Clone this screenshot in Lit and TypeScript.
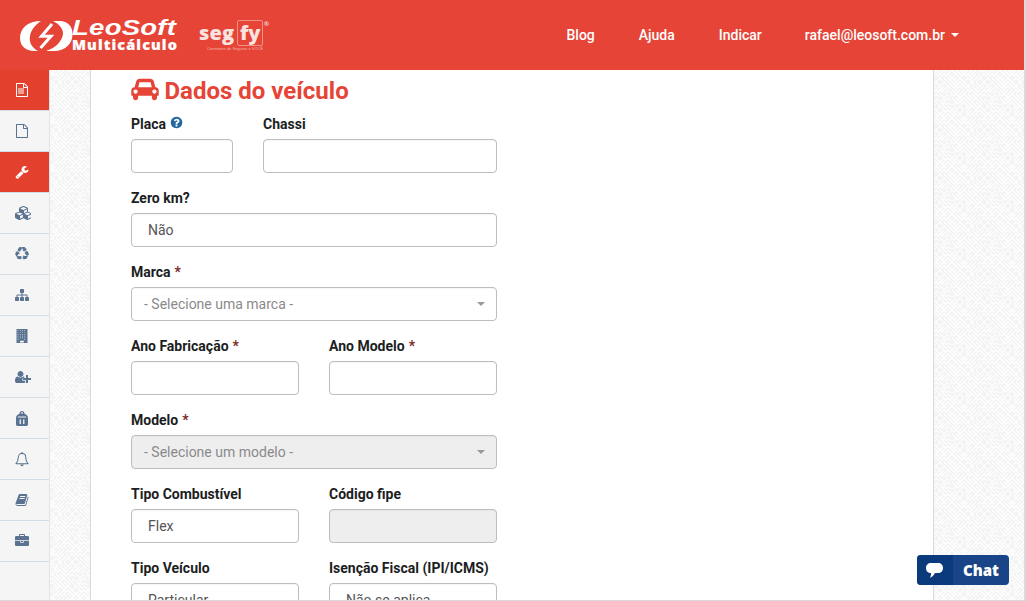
import { LitElement, html, css, svg, unsafeCSS } from "lit";
import { customElement } from "lit/decorators.js";

const FILE_O = "M1596 380q28 28 48 76t20 88v1152q0 40-28 68t-68 28h-1344q-40 0-68-28t-28-68v-1600q0-40 28-68t68-28h896q40 0 88 20t76 48zm-444-244v376h376q-10-29-22-41l-313-313q-12-12-41-22zm384 1528v-1024h-416q-40 0-68-28t-28-68v-416h-768v1536h1280z";
const TEXT_LINES = "M384 736q0-14 9-23t23-9h704q14 0 23 9t9 23v64q0 14-9 23t-23 9h-704q-14 0-23-9t-9-23v-64zm736 224q14 0 23 9t9 23v64q0 14-9 23t-23 9h-704q-14 0-23-9t-9-23v-64q0-14 9-23t23-9h704zm0 256q14 0 23 9t9 23v64q0 14-9 23t-23 9h-704q-14 0-23-9t-9-23v-64q0-14 9-23t23-9h704z";
const WRENCH = "M448 1472q0-26-19-45t-45-19-45 19-19 45 19 45 45 19 45-19 19-45zm644-420l-682 682q-37 37-90 37-52 0-91-37l-106-108q-38-36-38-90 0-53 38-91l681-681q39 98 114.500 173.500t173.500 114.500zm634-435q0 39-23 106-47 134-164.500 217.500t-258.500 83.500q-185 0-316.500-131.500t-131.500-316.500 131.500-316.500 316.500-131.500q58 0 121.500 16.500t107.500 46.500q16 11 16 28t-16 28l-293 169v224l193 107q5-3 79-48.500t135.500-81 70.500-35.500q15 0 23.500 10t8.500 25z";
const CUBES = "M640 1632l384-192v-314l-384 164v342zm-64-454l404-173-404-173-404 173zm1088 454l384-192v-314l-384 164v342zm-64-454l404-173-404-173-404 173zm-448-293l384-165v-266l-384 164v267zm-64-379l441-189-441-189-441 189zm1088 518v416q0 36-19 67t-52 47l-448 224q-25 14-57 14t-57-14l-448-224q-4-2-7-4-2 2-7 4l-448 224q-25 14-57 14t-57-14l-448-224q-33-16-52-47t-19-67v-416q0-38 21.500-70t56.500-48l434-186v-400q0-38 21.500-70t56.500-48l448-192q23-10 50-10t50 10l448 192q35 16 56.500 48t21.500 70v400l434 186q36 16 57 48t21 70z";
const RECYCLE = "M836 1169l-15 368-2 22-420-29q-36-3-67-31.500t-47-65.500q-11-27-14.500-55t4-65 12-55 21.500-64 19-53q78 12 509 28zm-387-586l180 379-147-92q-63 72-111.500 144.500t-72.500 125-39.500 94.500-18.500 63l-4 21-190-357q-17-26-18-56t6-47l8-18q35-63 114-188l-140-86zm1231 517l-188 359q-12 29-36.500 46.500t-43.500 20.500l-18 4q-71 7-219 12l8 164-230-367 211-362 7 173q170 16 283 5t170-33zm-785-924q-47 63-265 435l-317-187-19-12 225-356q20-31 60-45t80-10q24 2 48.500 12t42 21 41.500 33 36 34.500 36 39.500 32 35zm655 307l212 363q18 37 12.500 76t-27.500 74q-13 20-33 37t-38 28-48.500 22-47 16-51.500 14-46 12q-34-72-265-436l313-195zm-143-226l142-83-220 373-419-20 151-86q-34-89-75-166t-75.500-123.500-64.500-80-47-46.500l-17-13 405 1q31-3 58 10.500t39 28.500l11 15q39 61 112 190z";
const SITEMAP = "M1792 1248v320q0 40-28 68t-68 28h-320q-40 0-68-28t-28-68v-320q0-40 28-68t68-28h96v-192h-512v192h96q40 0 68 28t28 68v320q0 40-28 68t-68 28h-320q-40 0-68-28t-28-68v-320q0-40 28-68t68-28h96v-192h-512v192h96q40 0 68 28t28 68v320q0 40-28 68t-68 28h-320q-40 0-68-28t-28-68v-320q0-40 28-68t68-28h96v-192q0-52 38-90t90-38h512v-192h-96q-40 0-68-28t-28-68v-320q0-40 28-68t68-28h320q40 0 68 28t28 68v320q0 40-28 68t-68 28h-96v192h512q52 0 90 38t38 90v192h96q40 0 68 28t28 68z";
const USER_PLUS = "M704 896q-159 0-271.500-112.500t-112.500-271.500 112.500-271.500 271.500-112.500 271.500 112.500 112.500 271.500-112.500 271.500-271.500 112.500zm960 128h352q13 0 22.500 9.500t9.500 22.500v192q0 13-9.500 22.500t-22.500 9.500h-352v352q0 13-9.500 22.500t-22.500 9.500h-192q-13 0-22.500-9.500t-9.500-22.500v-352h-352q-13 0-22.500-9.500t-9.500-22.500v-192q0-13 9.500-22.500t22.500-9.500h352v-352q0-13 9.500-22.500t22.500-9.500h192q13 0 22.500 9.500t9.500 22.500v352zm-736 224q0 52 38 90t90 38h256v238q-68 50-171 50h-874q-121 0-194-69t-73-190q0-53 3.500-103.500t14-109 26.500-108.500 43-97.500 62-81 85.500-53.500 111.500-20q19 0 39 17 79 61 154.500 91.500t164.500 30.500 164.500-30.500 154.500-91.500q20-17 39-17 78 0 133 33v176h-128q-52 0-90 38t-38 90z";
const BOOK = "M1703 478q40 57 18 129l-275 906q-19 64-76.500 107.500t-122.500 43.500h-923q-77 0-148.500-53.500t-99.500-131.500q-24-67-2-127 0-4 3-27t4-37q1-8-3-21.500t-3-19.500q2-11 8-21t16.500-23.500 16.500-23.500q23-38 45-91.500t30-91.500q3-10 .5-30t-.5-28q3-11 17-28t17-23q21-36 42-92t25-90q1-9-2.500-32t.5-28q4-13 22-30.500t22-22.500q19-26 42.500-84.500t27.500-96.500q1-8-3-25.500t-2-26.500q2-8 9-18t18-23 17-21q8-12 16.500-30.500t15-35 16-36 19.500-32 26.500-23.500 36-11.500 47.500 5.500l-1 3q38-9 51-9h761q74 0 114 56t18 130l-274 906q-36 119-71.500 153.500t-128.500 34.500h-869q-27 0-38 15-11 16-1 43 24 70 144 70h923q29 0 56-15.500t35-41.500l300-987q7-22 5-57 38 15 59 43zm-1064 2q-4 13 2 22.500t20 9.500h608q13 0 25.500-9.500t16.500-22.500l21-64q4-13-2-22.500t-20-9.500h-608q-13 0-25.500 9.500t-16.500 22.500zm-83 256q-4 13 2 22.500t20 9.500h608q13 0 25.500-9.500t16.500-22.500l21-64q4-13-2-22.500t-20-9.500h-608q-13 0-25.500 9.500t-16.500 22.500z";
const BRIEFCASE = "M640 256h512v-128h-512v128zm1152 640v480q0 66-47 113t-113 47h-1472q-66 0-113-47t-47-113v-480h672v160q0 26 19 45t45 19h320q26 0 45-19t19-45v-160h672zm-768 0v128h-256v-128h256zm768-480v384h-1792v-384q0-66 47-113t113-47h352v-160q0-40 28-68t68-28h576q40 0 68 28t28 68v160h352q66 0 113 47t47 113z";
const CAR = "M480 1088q0-66-47-113t-113-47-113 47-47 113 47 113 113 47 113-47 47-113zm36-320h1016l-89-357q-2-8-14-17.500t-21-9.500h-768q-9 0-21 9.500t-14 17.500zm1372 320q0-66-47-113t-113-47-113 47-47 113 47 113 113 47 113-47 47-113zm160-96v384q0 14-9 23t-23 9h-96v128q0 80-56 136t-136 56-136-56-56-136v-128h-1024v128q0 80-56 136t-136 56-136-56-56-136v-128h-96q-14 0-23-9t-9-23v-384q0-93 65.500-158.500t158.500-65.500h28l105-419q23-94 104-157.500t179-63.500h768q98 0 179 63.500t104 157.500l105 419h28q93 0 158.500 65.500t65.500 158.500z";
const QUESTION = "M1024 1376v-192q0-14-9-23t-23-9h-192q-14 0-23 9t-9 23v192q0 14 9 23t23 9h192q14 0 23-9t9-23zm256-672q0-88-55.500-163t-138.500-116-170-41q-243 0-371 213-15 24 8 42l132 100q7 6 19 6 16 0 25-12 53-68 86-92 34-24 86-24 48 0 85.500 26t37.500 59q0 38-20 61t-68 45q-63 28-115.500 86.500t-52.500 125.500v36q0 14 9 23t23 9h192q14 0 23-9t9-23q0-19 21.500-49.500t54.500-49.500q32-18 49-28.500t46-35 44.500-48 28-60.500 12.500-81zm384 192q0 209-103 385.500t-279.500 279.500-385.500 103-385.500-103-279.500-279.500-103-385.500 103-385.500 279.500-279.500 385.500-103 385.500 103 279.500 279.500 103 385.500z";

function buildingPath(): string {
  let d = "M192 0h1408v1792h-1408z";
  for (let r = 0; r < 6; r++) {
    for (let c = 0; c < 4; c++) {
      if (r === 5 && (c === 1 || c === 2)) continue;
      const x = 340 + c * 290;
      const y = 170 + r * 230;
      d += `M${x} ${y}h90v90h-90z`;
    }
  }
  d += "M640 1490h500v240h-500z";
  return d;
}

// Woven background tile: short white diagonal dashes laid on a lattice.
function textureTile(): string {
  const size = 48;
  let seed = 7;
  const rnd = () => {
    seed = (seed * 1103515245 + 12345) & 0x7fffffff;
    return seed / 0x7fffffff;
  };
  let d = "";
  for (let y = 0; y < size; y += 4) {
    for (let x = 0; x < size; x += 4) {
      const len = rnd() < 0.5 ? 3 : 6;
      if (rnd() < 0.5) {
        d += `M${x} ${y}l${len} ${len}`;
        d += `M${x - size} ${y}l${len} ${len}M${x} ${y - size}l${len} ${len}`;
      } else {
        d += `M${x + 4} ${y}l-${len} ${len}`;
        d += `M${x + 4 + size} ${y}l-${len} ${len}M${x + 4} ${y - size}l-${len} ${len}`;
      }
    }
  }
  const s = `<svg xmlns='http://www.w3.org/2000/svg' width='${size}' height='${size}'><rect width='${size}' height='${size}' fill='#f3f3f3'/><path d='${d}' stroke='#fff' stroke-width='1.3' stroke-opacity='.95' fill='none'/></svg>`;
  return `url("data:image/svg+xml,${encodeURIComponent(s)}")`;
}

const ic = (d: string, w = 1792, h = 1792) =>
  svg`<svg class="ico" viewBox="0 0 ${w} ${h}" width="${(14 * w) / 1792}" height="14"><path fill-rule="evenodd" d="${d}"/></svg>`;

const BELL = svg`<svg class="ico" viewBox="0 0 15 16" width="14" height="15"><path d="M7.500 1.600c-2.700 0-4 2-4 4.200 0 3.400-1 5.200-2.500 6.700h13c-1.500-1.500-2.500-3.300-2.500-6.700 0-2.200-1.300-4.200-4-4.200z" fill="none" stroke="currentColor" stroke-width="1.100" stroke-linejoin="round"/><path d="M5.700 13.300a1.800 1.800 0 0 0 3.600 0z"/><rect x="6.700" y="0" width="1.600" height="2" rx=".8"/></svg>`;
const BAG = svg`<svg class="ico bag" viewBox="0 0 12 15" width="12" height="15"><path fill-rule="evenodd" d="M3.500 2.700C3.600 1 4.500 0 6 0s2.400 1 2.500 2.700C10.800 3.400 12 5 12 7.500v5.700c0 1-.7 1.800-1.800 1.800H1.800C.7 15 0 14.200 0 13.200V7.500C0 5 1.200 3.400 3.500 2.700zM4.800 2.400h2.400C7.100 1.700 6.700 1.200 6 1.200s-1.100.5-1.200 1.200zM2 5.600v.9h8v-.9zM3.600 8.500V13h1.300V8.500zM7.100 8.500V13h1.300V8.500z"/></svg>`;

const sideItems = [
  { icon: ic(FILE_O + TEXT_LINES), on: true },
  { icon: ic(FILE_O) },
  { icon: ic(WRENCH), on: true },
  { icon: ic(CUBES, 2048) },
  { icon: ic(RECYCLE) },
  { icon: ic(SITEMAP) },
  { icon: ic(buildingPath()) },
  { icon: ic(USER_PLUS, 2048) },
  { icon: BAG },
  { icon: BELL },
  { icon: ic(BOOK) },
  { icon: ic(BRIEFCASE) },
];

@customElement("app-root")
export class AppRoot extends LitElement {
  static styles = css`
    :host {
      display: block;
      width: 1026px;
      height: 601px;
      overflow: hidden;
      font-family: Roboto, "Liberation Sans", sans-serif;
      font-size: 14px;
      color: #1b1e22;
      box-sizing: border-box;
      border-right: 2px solid #d9d9d9;
      border-bottom: 1px solid #d9d9d9;
    }
    * { box-sizing: border-box; }
    .top {
      height: 70px;
      background: #e54436;
      display: flex;
      align-items: center;
      padding-left: 20px;
      color: #fff;
    }
    .logo { display: flex; align-items: center; width: 178px; flex: none; }
    .mark { flex: none; margin-top: 1px; }
    .words { display: flex; flex-direction: column; margin-left: -1px; margin-top: 1px; }
    .leosoft {
      font: italic 700 21.500px/19px "Liberation Sans", sans-serif;
      white-space: nowrap;
      height: 19px;
      transform: scaleX(1.28);
      transform-origin: left center;
      letter-spacing: 0.2px;
    }
    .multi {
      font: 800 14.500px/14px "Open Sans", "Liberation Sans", sans-serif;
      letter-spacing: 1.1px;
      white-space: nowrap;
      height: 14px;
      -webkit-text-stroke: 0.2px #fff;
    }
    .segfy { margin-left: 1px; display: flex; flex-direction: column; position: relative; margin-top: 2px; }
    .segrow { display: flex; align-items: center; height: 26px; }
    .seg { font: 800 20px/24px "Open Sans", sans-serif; color: #f9e3e0; letter-spacing: .1px; }
    .fy {
      font: 800 20px/24px "Open Sans", sans-serif;
      color: #f9e3e0;
      border: 1px solid #f0928a;
      border-radius: 2px;
      width: 26px;
      height: 26px;
      margin-left: 3px;
      text-align: center;
    }
    .reg { position: absolute; left: 65px; top: 0; font: 700 6px/8px "Open Sans", sans-serif; color: #f9e3e0; }
    .tag { font: 4px/6px "Liberation Sans", sans-serif; color: #f5b5ad; text-align: right; white-space: nowrap; height: 6px; }
    .nav {
      margin-left: auto;
      display: flex;
      gap: 44px;
      font-weight: 500;
      font-size: 14px;
      padding-right: 65px;
      align-items: center;
    }
    .nav span { display: inline-flex; align-items: center; white-space: nowrap; }
    .nav .user { margin-left: -1px; }
    .caret {
      display: inline-block;
      margin-left: 6px;
      border-left: 4px solid transparent;
      border-right: 4px solid transparent;
      border-top: 4px solid #fff;
    }
    .body {
      display: flex;
      height: 530px;
      background: ${unsafeCSS(textureTile())};
    }
    .side {
      width: 50px;
      flex: none;
      background: #f5f5f5;
      border-right: 1px solid #dde3e8;
      display: flex;
      flex-direction: column;
    }
    .item {
      height: 41px;
      flex: none;
      display: flex;
      align-items: center;
      padding-left: 15px;
      color: #5a7391;
      border-bottom: 1px solid #d5dee5;
    }
    .item.on { background: #e3412e; color: #fff; }
    .item .ico { fill: currentColor; display: block; }
    .item .bag { margin-left: 1px; }
    .panel {
      margin-left: 40px;
      width: 844px;
      background: #fff;
      border-left: 1px solid #d9d9d9;
      border-right: 1px solid #d9d9d9;
      padding: 0 40px;
      overflow: hidden;
    }
    h1 {
      margin: 0;
      height: 44px;
      padding-bottom: 2px;
      display: flex;
      align-items: center;
      gap: 5.500px;
      font-size: 24px;
      line-height: 40px;
      font-weight: 700;
      color: #e54436;
    }
    h1 svg { fill: #e54436; display: block; margin-top: -4px; }
    form {
      width: 366px;
      display: grid;
      grid-template-columns: repeat(6, 1fr);
      column-gap: 30px;
      row-gap: 15px;
      align-items: start;
    }
    .f { display: flex; flex-direction: column; }
    .s6 { grid-column: span 6; }
    .s3 { grid-column: span 3; }
    .row { grid-column: span 6; display: flex; gap: 30px; }
    .row .f { flex: 1 1 0; min-width: 0; }
    .row .narrow { flex: none; width: 102px; }
    label {
      font-weight: 700;
      font-size: 14px;
      line-height: 20px;
      height: 25px;
      display: flex;
      align-items: flex-start;
      gap: 4px;
      white-space: nowrap;
    }
    label .req { color: #7a2a2a; font-weight: 700; }
    label svg { fill: #23679f; margin-top: 2px; }
    .ctl {
      height: 34px;
      border: 1px solid #bdbdbd;
      border-radius: 4px;
      background: #fff;
      font-size: 14px;
      color: #555;
      display: flex;
      align-items: center;
      padding: 0 16px;
      box-shadow: inset 0 1px 1px rgba(0,0,0,.04);
    }
    .sel { padding: 0 12px; color: #8a8a8a; justify-content: space-between; }
    .sel::after {
      content: "";
      border-left: 4px solid transparent;
      border-right: 4px solid transparent;
      border-top: 4px solid #999;
      margin-right: -1px;
    }
    .off { background: #eee; }
    .chat {
      position: absolute;
      left: 917px;
      top: 555px;
      width: 92px;
      height: 30px;
      border-radius: 4px;
      background: #1a4488;
      color: #fff;
      display: flex;
      overflow: hidden;
      font: 800 15px/30px "Open Sans", "Liberation Sans", sans-serif;
    }
    .chat .b {
      width: 36px;
      background: #0b3a7c;
      display: flex;
      align-items: center;
      justify-content: center;
    }
    .chat .t { flex: 1; text-align: center; }
    .chat svg { fill: #fff; display: block; margin-left: -1px; }
  `;

  field(label: string, cls = "", req = false, kind = "", value = "", help = false) {
    return html`<div class="f ${cls}">
      <label>${label}${req ? html`<span class="req">*</span>` : ""}${help
          ? html`<svg viewBox="0 0 1792 1792" width="13" height="13"><path d="${QUESTION}" transform="translate(-32 -32) scale(1.04)"/></svg>`
          : ""}</label>
      <div class="ctl ${kind}">${value}</div>
    </div>`;
  }

  render() {
    return html`
      <div class="top">
        <div class="logo">
          <svg class="mark" width="53" height="32" viewBox="0 0 53 32">
            <path fill="#fff" d="M21 1C8 1 0 8 0 18c0 8 6 13 14 13h4c-7-4-9-9-8-15 1-6 5-11 11-15z"/>
            <path fill="#fff" d="M33 1h7c7 0 12.500 5 12.500 13 0 10-7.500 17-18.500 17h-8c9-3 16-9 17-17 .5-5-4-10-10-13z"/>
            <path fill="none" stroke="#fff" stroke-width="3" stroke-linejoin="miter" d="M32 4 21.500 16.200h9.500L20.500 28"/>
          </svg>
          <div class="words">
            <div class="leosoft">LeoSoft</div>
            <div class="multi">Multicálculo</div>
          </div>
        </div>
        <div class="segfy">
          <div class="segrow"><span class="seg">seg</span><span class="fy">fy</span></div>
          <span class="reg">®</span>
          <div class="tag">Corretores de Seguros e VOCÊ</div>
        </div>
        <div class="nav">
          <span>Blog</span><span>Ajuda</span><span>Indicar</span>
          <span class="user">rafael@leosoft.com.br<i class="caret"></i></span>
        </div>
      </div>
      <div class="body">
        <div class="side">
          ${sideItems.map((s) => html`<div class="item ${s.on ? "on" : ""}">${s.icon}</div>`)}
        </div>
        <div class="panel">
          <h1>
            <svg viewBox="0 0 2048 1792" width="28" height="24"><path d="${CAR}"/></svg>
            Dados do veículo
          </h1>
          <form>
            <div class="row">
              ${this.field("Placa", "narrow", false, "", "", true)}
              ${this.field("Chassi")}
            </div>
            ${this.field("Zero km?", "s6", false, "", "Não")}
            ${this.field("Marca", "s6", true, "sel", "- Selecione uma marca -")}
            ${this.field("Ano Fabricação", "s3", true)}
            ${this.field("Ano Modelo", "s3", true)}
            ${this.field("Modelo", "s6", true, "sel off", "- Selecione um modelo -")}
            ${this.field("Tipo Combustível", "s3", false, "", "Flex")}
            ${this.field("Código fipe", "s3", false, "off")}
            ${this.field("Tipo Veículo", "s3", false, "", "Particular")}
            ${this.field("Isenção Fiscal (IPI/ICMS)", "s3", false, "", "Não se aplica")}
          </form>
        </div>
      </div>
      <div class="chat">
        <div class="b">
          <svg width="17" height="15" viewBox="0 0 17 15"><path d="M5 0h7c3 0 5 2 5 5s-2 5-5 5H9c-1 2-3 4-5 5 .7-1.500 1-3 1-5-3 0-5-2-5-5s2-5 5-5z"/></svg>
        </div>
        <div class="t">Chat</div>
      </div>
    `;
  }
}
